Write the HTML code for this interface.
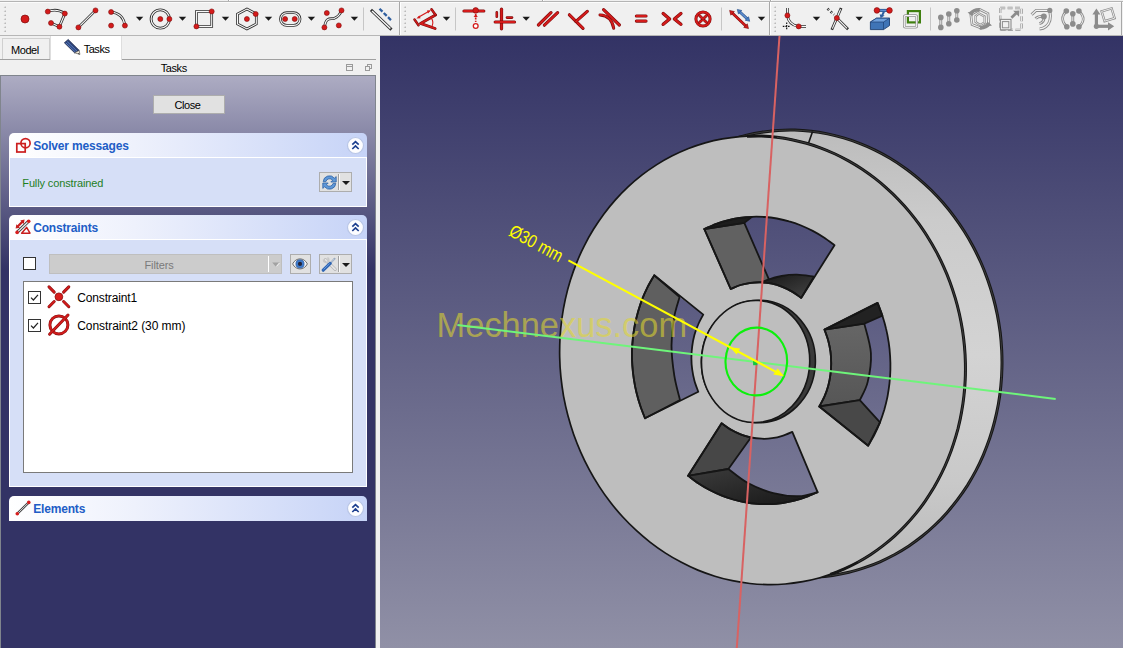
<!DOCTYPE html>
<html>
<head>
<meta charset="utf-8">
<title>FreeCAD Sketcher</title>
<style>
html,body{margin:0;padding:0;}
body{width:1123px;height:648px;overflow:hidden;background:#f0f0f0;position:relative;
  font-family:"Liberation Sans","DejaVu Sans",sans-serif;font-size:11px;color:#000;}
.abs{position:absolute;}
#topline{left:0;top:1px;width:1123px;height:1px;background:#b4b4b4;border-bottom:1px solid #fbfbfb;}
#tbline{left:0;top:35px;width:1123px;height:1px;background:#b6b6b6;}
.vsep{position:absolute;top:8px;width:1px;height:22px;background:#c4c4c4;}
.tbsep{position:absolute;top:2px;width:1px;height:33px;background:#a9a9a9;}
.tbsep2{position:absolute;top:2px;width:1px;height:33px;background:#fdfdfd;}
.ico{position:absolute;overflow:visible;}
.dd{position:absolute;top:16px;width:0;height:0;border-left:4px solid transparent;border-right:4px solid transparent;border-top:4px solid #1a1a1a;}
#view{left:380px;top:36px;width:743px;height:612px;background:linear-gradient(#333365 0,#9090a6 612px);overflow:hidden;}
#panel{left:0;top:75px;width:376px;height:573px;box-sizing:border-box;border-left:1px solid #80858d;border-top:1px solid #80858d;border-right:1px solid #80858d;
  background:linear-gradient(#adacc3 0,#333365 193px,#333365 100%);}
.txt{position:absolute;white-space:nowrap;line-height:14px;}
.hdr{position:absolute;left:9px;width:358px;height:25px;box-sizing:border-box;border-radius:5px 5px 0 0;
  background:linear-gradient(90deg,#ffffff 0,#eef1fc 35%,#c6d3f7 100%);border-bottom:1px solid #fff;}
.hdr .t{position:absolute;left:24.2px;top:6px;font-weight:bold;font-size:12px;color:#215dc6;white-space:nowrap;line-height:14px;letter-spacing:-0.17px;}
.bodyb{position:absolute;left:9px;width:358px;box-sizing:border-box;background:#d6dff7;border:1px solid #fff;border-top:none;}
</style>
</head>
<body>
<div id="topline" class="abs"></div>
<div id="tbline" class="abs"></div>
<svg class="abs" style="left:0;top:0;" width="1123" height="36" viewBox="0 0 1123 36">
<rect x="228" y="0" width="1" height="1" fill="#a8a8a8"/><rect x="229" y="0" width="1" height="1" fill="#ffffff"/>
<rect x="542" y="0" width="1" height="1" fill="#a8a8a8"/><rect x="543" y="0" width="1" height="1" fill="#ffffff"/>
<rect x="770" y="0" width="1" height="1" fill="#a8a8a8"/><rect x="771" y="0" width="1" height="1" fill="#ffffff"/>
<path d="M3.8000000000000003 8.1 L5.800000000000001 8.1 L5.800000000000001 6.1000000000000005 Z" fill="#adadad"/><path d="M3.8000000000000003 8.1 L3.8000000000000003 7.1000000000000005 L4.8 6.1000000000000005 L5.800000000000001 6.1000000000000005 Z" fill="#e2e2e2"/><path d="M3.8000000000000003 12.1 L5.800000000000001 12.1 L5.800000000000001 10.1 Z" fill="#adadad"/><path d="M3.8000000000000003 12.1 L3.8000000000000003 11.1 L4.8 10.1 L5.800000000000001 10.1 Z" fill="#e2e2e2"/><path d="M3.8000000000000003 16.099999999999998 L5.800000000000001 16.099999999999998 L5.800000000000001 14.1 Z" fill="#adadad"/><path d="M3.8000000000000003 16.099999999999998 L3.8000000000000003 15.1 L4.8 14.1 L5.800000000000001 14.1 Z" fill="#e2e2e2"/><path d="M3.8000000000000003 20.099999999999998 L5.800000000000001 20.099999999999998 L5.800000000000001 18.099999999999998 Z" fill="#adadad"/><path d="M3.8000000000000003 20.099999999999998 L3.8000000000000003 19.099999999999998 L4.8 18.099999999999998 L5.800000000000001 18.099999999999998 Z" fill="#e2e2e2"/><path d="M3.8000000000000003 24.099999999999998 L5.800000000000001 24.099999999999998 L5.800000000000001 22.099999999999998 Z" fill="#adadad"/><path d="M3.8000000000000003 24.099999999999998 L3.8000000000000003 23.099999999999998 L4.8 22.099999999999998 L5.800000000000001 22.099999999999998 Z" fill="#e2e2e2"/><path d="M3.8000000000000003 28.099999999999998 L5.800000000000001 28.099999999999998 L5.800000000000001 26.099999999999998 Z" fill="#adadad"/><path d="M3.8000000000000003 28.099999999999998 L3.8000000000000003 27.099999999999998 L4.8 26.099999999999998 L5.800000000000001 26.099999999999998 Z" fill="#e2e2e2"/><path d="M3.8000000000000003 32.1 L5.800000000000001 32.1 L5.800000000000001 30.099999999999998 Z" fill="#adadad"/><path d="M3.8000000000000003 32.1 L3.8000000000000003 31.099999999999998 L4.8 30.099999999999998 L5.800000000000001 30.099999999999998 Z" fill="#e2e2e2"/>
<circle cx="25" cy="19" r="4" fill="#d41b1b" stroke="#7d0c0c" stroke-width="0.7"/>
<path d="M47.8 11.6 Q57 8 64.8 13.6 L59.4 26.7 L51 23" fill="none" stroke="#2e2e2e" stroke-width="2.7" stroke-linecap="butt"/><path d="M47.8 11.6 Q57 8 64.8 13.6 L59.4 26.7 L51 23" fill="none" stroke="#fafafa" stroke-width="1.1"/>
<circle cx="47.8" cy="11.6" r="2.5" fill="#d41b1b" stroke="#7d0c0c" stroke-width="0.6"/><circle cx="64.8" cy="13.6" r="2.5" fill="#d41b1b" stroke="#7d0c0c" stroke-width="0.6"/><circle cx="59.4" cy="26.7" r="2.5" fill="#d41b1b" stroke="#7d0c0c" stroke-width="0.6"/><circle cx="51" cy="23" r="2.5" fill="#d41b1b" stroke="#7d0c0c" stroke-width="0.6"/>
<path d="M78.4 27.4 L95.5 10.4" fill="none" stroke="#2e2e2e" stroke-width="2.7" stroke-linecap="butt"/><path d="M78.4 27.4 L95.5 10.4" fill="none" stroke="#fafafa" stroke-width="1.1"/>
<circle cx="78.4" cy="27.4" r="2.5" fill="#d41b1b" stroke="#7d0c0c" stroke-width="0.6"/><circle cx="95.5" cy="10.4" r="2.5" fill="#d41b1b" stroke="#7d0c0c" stroke-width="0.6"/>
<path d="M111.1 12 Q123.5 13.5 124.9 25.6" fill="none" stroke="#2e2e2e" stroke-width="2.7" stroke-linecap="butt"/><path d="M111.1 12 Q123.5 13.5 124.9 25.6" fill="none" stroke="#fafafa" stroke-width="1.1"/>
<circle cx="111.1" cy="12" r="2.5" fill="#d41b1b" stroke="#7d0c0c" stroke-width="0.6"/><circle cx="124.9" cy="25.6" r="2.5" fill="#d41b1b" stroke="#7d0c0c" stroke-width="0.6"/><circle cx="111.1" cy="25.6" r="2.5" fill="#d41b1b" stroke="#7d0c0c" stroke-width="0.6"/>
<path d="M135.9 16.7 L143.29999999999998 16.7 L139.6 20.8 Z" fill="#1a1a1a"/>
<circle cx="160.3" cy="19" r="9.2" fill="none" stroke="#2e2e2e" stroke-width="2.8"/><circle cx="160.3" cy="19" r="9.2" fill="none" stroke="#fafafa" stroke-width="1.1"/>
<circle cx="160.3" cy="19" r="2.5" fill="#d41b1b" stroke="#7d0c0c" stroke-width="0.6"/><circle cx="169.4" cy="19" r="2.5" fill="#d41b1b" stroke="#7d0c0c" stroke-width="0.6"/>
<path d="M178.8 16.7 L186.2 16.7 L182.5 20.8 Z" fill="#1a1a1a"/>
<path d="M196.4 11.6 L211.7 11.6 L211.7 26.4 L196.4 26.4 Z" fill="none" stroke="#2e2e2e" stroke-width="2.7" stroke-linecap="butt"/><path d="M196.4 11.6 L211.7 11.6 L211.7 26.4 L196.4 26.4 Z" fill="none" stroke="#fafafa" stroke-width="1.1"/>
<circle cx="211.7" cy="11.4" r="2.5" fill="#d41b1b" stroke="#7d0c0c" stroke-width="0.6"/><circle cx="196.4" cy="26.4" r="2.5" fill="#d41b1b" stroke="#7d0c0c" stroke-width="0.6"/>
<path d="M221.8 16.7 L229.2 16.7 L225.5 20.8 Z" fill="#1a1a1a"/>
<path d="M246.9 9 L256.3 14 L256.3 24 L246.9 29 L237.5 24 L237.5 14 Z" fill="none" stroke="#2e2e2e" stroke-width="2.7" stroke-linecap="butt"/><path d="M246.9 9 L256.3 14 L256.3 24 L246.9 29 L237.5 24 L237.5 14 Z" fill="none" stroke="#fafafa" stroke-width="1.1"/>
<circle cx="246.9" cy="19" r="2.5" fill="#d41b1b" stroke="#7d0c0c" stroke-width="0.6"/><circle cx="255.7" cy="14" r="2.5" fill="#d41b1b" stroke="#7d0c0c" stroke-width="0.6"/>
<path d="M264.8 16.7 L272.2 16.7 L268.5 20.8 Z" fill="#1a1a1a"/>
<path d="M286.8 12.7 L293.7 12.7 A6.35 6.35 0 0 1 293.7 25.4 L286.8 25.4 A6.35 6.35 0 0 1 286.8 12.7 Z" fill="none" stroke="#2e2e2e" stroke-width="2.7" stroke-linecap="butt"/><path d="M286.8 12.7 L293.7 12.7 A6.35 6.35 0 0 1 293.7 25.4 L286.8 25.4 A6.35 6.35 0 0 1 286.8 12.7 Z" fill="none" stroke="#fafafa" stroke-width="1.1"/>
<circle cx="285.1" cy="19" r="2.5" fill="#d41b1b" stroke="#7d0c0c" stroke-width="0.6"/><circle cx="294.7" cy="19" r="2.5" fill="#d41b1b" stroke="#7d0c0c" stroke-width="0.6"/>
<path d="M307.7 16.7 L315.09999999999997 16.7 L311.4 20.8 Z" fill="#1a1a1a"/>
<path d="M324.4 27.4 C326 16 331 19.5 334 18.5 C338 17 340 15 341.5 10.4" fill="none" stroke="#2e2e2e" stroke-width="2.7" stroke-linecap="butt"/><path d="M324.4 27.4 C326 16 331 19.5 334 18.5 C338 17 340 15 341.5 10.4" fill="none" stroke="#fafafa" stroke-width="1.1"/>
<circle cx="326.8" cy="13" r="2.5" fill="#d41b1b" stroke="#7d0c0c" stroke-width="0.6"/><circle cx="341.5" cy="10.4" r="2.5" fill="#d41b1b" stroke="#7d0c0c" stroke-width="0.6"/><circle cx="324.4" cy="27.4" r="2.5" fill="#d41b1b" stroke="#7d0c0c" stroke-width="0.6"/><circle cx="338.8" cy="25.4" r="2.5" fill="#d41b1b" stroke="#7d0c0c" stroke-width="0.6"/>
<path d="M350.7 16.7 L358.09999999999997 16.7 L354.4 20.8 Z" fill="#1a1a1a"/>
<line x1="363.5" y1="7.5" x2="363.5" y2="30.5" stroke="#c6c6c6" stroke-width="1"/>
<path d="M372 10.9 L390.4 28.6" fill="none" stroke="#2e2e2e" stroke-width="3.0" stroke-linecap="square"/><path d="M372 10.9 L390.4 28.6" fill="none" stroke="#fafafa" stroke-width="1.4"/>
<path d="M379.5 8.7 L392.2 21.4" stroke="#2f5f9f" stroke-width="2.3" stroke-dasharray="4.2 1.8"/>
<line x1="399.5" y1="2" x2="399.5" y2="35" stroke="#a8a8a8" stroke-width="1"/><line x1="400.5" y1="2" x2="400.5" y2="35" stroke="#ffffff" stroke-width="1"/>
<path d="M403.8 8.1 L405.8 8.1 L405.8 6.1000000000000005 Z" fill="#adadad"/><path d="M403.8 8.1 L403.8 7.1000000000000005 L404.8 6.1000000000000005 L405.8 6.1000000000000005 Z" fill="#e2e2e2"/><path d="M403.8 12.1 L405.8 12.1 L405.8 10.1 Z" fill="#adadad"/><path d="M403.8 12.1 L403.8 11.1 L404.8 10.1 L405.8 10.1 Z" fill="#e2e2e2"/><path d="M403.8 16.099999999999998 L405.8 16.099999999999998 L405.8 14.1 Z" fill="#adadad"/><path d="M403.8 16.099999999999998 L403.8 15.1 L404.8 14.1 L405.8 14.1 Z" fill="#e2e2e2"/><path d="M403.8 20.099999999999998 L405.8 20.099999999999998 L405.8 18.099999999999998 Z" fill="#adadad"/><path d="M403.8 20.099999999999998 L403.8 19.099999999999998 L404.8 18.099999999999998 L405.8 18.099999999999998 Z" fill="#e2e2e2"/><path d="M403.8 24.099999999999998 L405.8 24.099999999999998 L405.8 22.099999999999998 Z" fill="#adadad"/><path d="M403.8 24.099999999999998 L403.8 23.099999999999998 L404.8 22.099999999999998 L405.8 22.099999999999998 Z" fill="#e2e2e2"/><path d="M403.8 28.099999999999998 L405.8 28.099999999999998 L405.8 26.099999999999998 Z" fill="#adadad"/><path d="M403.8 28.099999999999998 L403.8 27.099999999999998 L404.8 26.099999999999998 L405.8 26.099999999999998 Z" fill="#e2e2e2"/><path d="M403.8 32.1 L405.8 32.1 L405.8 30.099999999999998 Z" fill="#adadad"/><path d="M403.8 32.1 L403.8 31.099999999999998 L404.8 30.099999999999998 L405.8 30.099999999999998 Z" fill="#e2e2e2"/>
<path d="M435.5 14.9 L420.5 23.4 L435.1 28.5" fill="none" stroke="#7d0c0c" stroke-width="2.9000000000000004" stroke-linecap="round" stroke-linejoin="round"/><path d="M435.5 14.9 L420.5 23.4 L435.1 28.5" fill="none" stroke="#d41b1b" stroke-width="1.7000000000000002" stroke-linecap="round" stroke-linejoin="round"/>
<path d="M414.5 19.5 L418.5 25.2" fill="none" stroke="#7d0c0c" stroke-width="2.5" stroke-linecap="round" stroke-linejoin="round"/><path d="M414.5 19.5 L418.5 25.2" fill="none" stroke="#d41b1b" stroke-width="1.2999999999999998" stroke-linecap="round" stroke-linejoin="round"/><path d="M431.5 9.3 L435.4 14.7" fill="none" stroke="#7d0c0c" stroke-width="2.5" stroke-linecap="round" stroke-linejoin="round"/><path d="M431.5 9.3 L435.4 14.7" fill="none" stroke="#d41b1b" stroke-width="1.2999999999999998" stroke-linecap="round" stroke-linejoin="round"/>
<path d="M418 17.6 L429.4 11.1" fill="none" stroke="#d41b1b" stroke-width="1.2"/>
<path d="M416.4 18.6 L419.4 15.4 L420.6 18.2 Z M431 10.2 L428 13.4 L426.9 10.6 Z" fill="#d41b1b"/>
<path d="M431.6 18.6 Q433.8 22 432.1 26" fill="none" stroke="#d41b1b" stroke-width="1.1"/>
<path d="M442.8 16.7 L450.2 16.7 L446.5 20.8 Z" fill="#1a1a1a"/>
<line x1="455.5" y1="7.5" x2="455.5" y2="30.5" stroke="#c6c6c6" stroke-width="1"/>
<path d="M464 11 L483.8 11" fill="none" stroke="#7d0c0c" stroke-width="3.2" stroke-linecap="round" stroke-linejoin="round"/><path d="M464 11 L483.8 11" fill="none" stroke="#d41b1b" stroke-width="2.0" stroke-linecap="round" stroke-linejoin="round"/>
<circle cx="475.7" cy="10.4" r="2.8" fill="#d41b1b" stroke="#7d0c0c" stroke-width="0.6"/>
<path d="M475.7 14 L475.7 22" stroke="#d41b1b" stroke-width="1.6" stroke-dasharray="2 1.4"/><path d="M473.6 17 L475.7 14.2 L477.8 17 Z" fill="#d41b1b"/>
<circle cx="475.7" cy="26" r="2.4" fill="#fff" stroke="#d41b1b" stroke-width="1.3"/>
<path d="M501.5 9.2 L501.5 28.8" fill="none" stroke="#7d0c0c" stroke-width="3.2" stroke-linecap="round" stroke-linejoin="round"/><path d="M501.5 9.2 L501.5 28.8" fill="none" stroke="#d41b1b" stroke-width="2.0" stroke-linecap="round" stroke-linejoin="round"/><path d="M495.2 22 L514.5 22" fill="none" stroke="#7d0c0c" stroke-width="3.2" stroke-linecap="round" stroke-linejoin="round"/><path d="M495.2 22 L514.5 22" fill="none" stroke="#d41b1b" stroke-width="2.0" stroke-linecap="round" stroke-linejoin="round"/>
<path d="M496.8 12.4 L496.8 16.8" fill="none" stroke="#7d0c0c" stroke-width="2.6" stroke-linecap="round" stroke-linejoin="round"/><path d="M496.8 12.4 L496.8 16.8" fill="none" stroke="#d41b1b" stroke-width="1.4" stroke-linecap="round" stroke-linejoin="round"/><path d="M507 17.6 L512 17.6" fill="none" stroke="#7d0c0c" stroke-width="2.6" stroke-linecap="round" stroke-linejoin="round"/><path d="M507 17.6 L512 17.6" fill="none" stroke="#d41b1b" stroke-width="1.4" stroke-linecap="round" stroke-linejoin="round"/>
<path d="M522.5 16.7 L529.9000000000001 16.7 L526.2 20.8 Z" fill="#1a1a1a"/>
<path d="M538.4 25 L551 12.7" fill="none" stroke="#7d0c0c" stroke-width="3.2" stroke-linecap="round" stroke-linejoin="round"/><path d="M538.4 25 L551 12.7" fill="none" stroke="#d41b1b" stroke-width="2.0" stroke-linecap="round" stroke-linejoin="round"/><path d="M544.4 25.2 L557.6 12.7" fill="none" stroke="#7d0c0c" stroke-width="3.2" stroke-linecap="round" stroke-linejoin="round"/><path d="M544.4 25.2 L557.6 12.7" fill="none" stroke="#d41b1b" stroke-width="2.0" stroke-linecap="round" stroke-linejoin="round"/>
<path d="M569.4 14.8 L583 28.3" fill="none" stroke="#7d0c0c" stroke-width="3.2" stroke-linecap="round" stroke-linejoin="round"/><path d="M569.4 14.8 L583 28.3" fill="none" stroke="#d41b1b" stroke-width="2.0" stroke-linecap="round" stroke-linejoin="round"/><path d="M576 21.4 L587.3 11.4" fill="none" stroke="#7d0c0c" stroke-width="3.2" stroke-linecap="round" stroke-linejoin="round"/><path d="M576 21.4 L587.3 11.4" fill="none" stroke="#d41b1b" stroke-width="2.0" stroke-linecap="round" stroke-linejoin="round"/>
<path d="M600 14.9 Q611.5 15.5 613.7 28.2" fill="none" stroke="#7d0c0c" stroke-width="3.0" stroke-linecap="round" stroke-linejoin="round"/><path d="M600 14.9 Q611.5 15.5 613.7 28.2" fill="none" stroke="#d41b1b" stroke-width="1.8000000000000003" stroke-linecap="round" stroke-linejoin="round"/><path d="M603.6 9.7 L619.4 25" fill="none" stroke="#7d0c0c" stroke-width="3.2" stroke-linecap="round" stroke-linejoin="round"/><path d="M603.6 9.7 L619.4 25" fill="none" stroke="#d41b1b" stroke-width="2.0" stroke-linecap="round" stroke-linejoin="round"/>
<path d="M636.4 16 L646 16" fill="none" stroke="#7d0c0c" stroke-width="3.2" stroke-linecap="round" stroke-linejoin="round"/><path d="M636.4 16 L646 16" fill="none" stroke="#d41b1b" stroke-width="2.0" stroke-linecap="round" stroke-linejoin="round"/><path d="M636.4 21.1 L646 21.1" fill="none" stroke="#7d0c0c" stroke-width="3.2" stroke-linecap="round" stroke-linejoin="round"/><path d="M636.4 21.1 L646 21.1" fill="none" stroke="#d41b1b" stroke-width="2.0" stroke-linecap="round" stroke-linejoin="round"/>
<path d="M663.2 13.5 L669.6 19 L663.2 24.3" fill="none" stroke="#7d0c0c" stroke-width="3.4000000000000004" stroke-linecap="round" stroke-linejoin="round"/><path d="M663.2 13.5 L669.6 19 L663.2 24.3" fill="none" stroke="#d41b1b" stroke-width="2.2" stroke-linecap="round" stroke-linejoin="round"/><path d="M680.9 13.5 L674.4 19 L680.9 24.3" fill="none" stroke="#7d0c0c" stroke-width="3.4000000000000004" stroke-linecap="round" stroke-linejoin="round"/><path d="M680.9 13.5 L674.4 19 L680.9 24.3" fill="none" stroke="#d41b1b" stroke-width="2.2" stroke-linecap="round" stroke-linejoin="round"/>
<circle cx="703" cy="19" r="7.1" fill="none" stroke="#7d0c0c" stroke-width="3"/><circle cx="703" cy="19" r="7.1" fill="none" stroke="#d41b1b" stroke-width="2"/>
<path d="M699.4 15.4 L706.6 22.6 M706.6 15.4 L699.4 22.6" fill="none" stroke="#7d0c0c" stroke-width="2.8" stroke-linecap="round" stroke-linejoin="round"/><path d="M699.4 15.4 L706.6 22.6 M706.6 15.4 L699.4 22.6" fill="none" stroke="#d41b1b" stroke-width="1.6" stroke-linecap="round" stroke-linejoin="round"/>
<line x1="721.5" y1="7.5" x2="721.5" y2="30.5" stroke="#c6c6c6" stroke-width="1"/>
<path d="M731.5 12.3 L746.6 26.7" stroke="#7d0c0c" stroke-width="2.8"/><path d="M731.5 12.3 L746.6 26.7" stroke="#d41b1b" stroke-width="1.8"/>
<path d="M729.6 10.4 L734.4 11.6 L730.8 15.2 Z M748.5 28.6 L743.7 27.4 L747.3 23.8 Z" fill="#d41b1b" stroke="#7d0c0c" stroke-width="0.6"/>
<path d="M739.3 11.4 L747.7 19.3" stroke="#204a87" stroke-width="2.8"/><path d="M739.3 11.4 L747.7 19.3" stroke="#5f8fd0" stroke-width="1.6"/>
<path d="M737.3 9.4 L741.8 10.5 L738.4 13.9 Z M749.7 21.3 L745.2 20.2 L748.6 16.8 Z" fill="#4a7fc4" stroke="#204a87" stroke-width="0.6"/>
<path d="M757.8 16.7 L765.2 16.7 L761.5 20.8 Z" fill="#1a1a1a"/>
<line x1="769.5" y1="2" x2="769.5" y2="35" stroke="#a8a8a8" stroke-width="1"/><line x1="770.5" y1="2" x2="770.5" y2="35" stroke="#ffffff" stroke-width="1"/>
<path d="M773.8000000000001 8.1 L775.8000000000001 8.1 L775.8000000000001 6.1000000000000005 Z" fill="#adadad"/><path d="M773.8000000000001 8.1 L773.8000000000001 7.1000000000000005 L774.8000000000001 6.1000000000000005 L775.8000000000001 6.1000000000000005 Z" fill="#e2e2e2"/><path d="M773.8000000000001 12.1 L775.8000000000001 12.1 L775.8000000000001 10.1 Z" fill="#adadad"/><path d="M773.8000000000001 12.1 L773.8000000000001 11.1 L774.8000000000001 10.1 L775.8000000000001 10.1 Z" fill="#e2e2e2"/><path d="M773.8000000000001 16.099999999999998 L775.8000000000001 16.099999999999998 L775.8000000000001 14.1 Z" fill="#adadad"/><path d="M773.8000000000001 16.099999999999998 L773.8000000000001 15.1 L774.8000000000001 14.1 L775.8000000000001 14.1 Z" fill="#e2e2e2"/><path d="M773.8000000000001 20.099999999999998 L775.8000000000001 20.099999999999998 L775.8000000000001 18.099999999999998 Z" fill="#adadad"/><path d="M773.8000000000001 20.099999999999998 L773.8000000000001 19.099999999999998 L774.8000000000001 18.099999999999998 L775.8000000000001 18.099999999999998 Z" fill="#e2e2e2"/><path d="M773.8000000000001 24.099999999999998 L775.8000000000001 24.099999999999998 L775.8000000000001 22.099999999999998 Z" fill="#adadad"/><path d="M773.8000000000001 24.099999999999998 L773.8000000000001 23.099999999999998 L774.8000000000001 22.099999999999998 L775.8000000000001 22.099999999999998 Z" fill="#e2e2e2"/><path d="M773.8000000000001 28.099999999999998 L775.8000000000001 28.099999999999998 L775.8000000000001 26.099999999999998 Z" fill="#adadad"/><path d="M773.8000000000001 28.099999999999998 L773.8000000000001 27.099999999999998 L774.8000000000001 26.099999999999998 L775.8000000000001 26.099999999999998 Z" fill="#e2e2e2"/><path d="M773.8000000000001 32.1 L775.8000000000001 32.1 L775.8000000000001 30.099999999999998 Z" fill="#adadad"/><path d="M773.8000000000001 32.1 L773.8000000000001 31.099999999999998 L774.8000000000001 30.099999999999998 L775.8000000000001 30.099999999999998 Z" fill="#e2e2e2"/>
<path d="M787.4 8 L787.4 15.4 Q788.5 25 798.7 26.4 L806 26.4" fill="none" stroke="#2e2e2e" stroke-width="2.7" stroke-linecap="butt"/><path d="M787.4 8 L787.4 15.4 Q788.5 25 798.7 26.4 L806 26.4" fill="none" stroke="#fafafa" stroke-width="1.1"/>
<circle cx="787.4" cy="15.4" r="2.5" fill="#d41b1b" stroke="#7d0c0c" stroke-width="0.6"/><circle cx="798.7" cy="26.4" r="2.5" fill="#d41b1b" stroke="#7d0c0c" stroke-width="0.6"/>
<path d="M786.7 22.4 L786.7 30.2 M782.8 26.4 L790.6 26.4" stroke="#111" stroke-width="1.2" stroke-dasharray="1.6 1"/>
<path d="M812.8 16.7 L820.2 16.7 L816.5 20.8 Z" fill="#1a1a1a"/>
<path d="M840.6 9.2 L832.3 28.6" fill="none" stroke="#2e2e2e" stroke-width="2.7" stroke-linecap="square"/><path d="M840.6 9.2 L832.3 28.6" fill="none" stroke="#fafafa" stroke-width="1.1"/>
<path d="M836.8 18 L847.1 28.3" fill="none" stroke="#2e2e2e" stroke-width="2.7" stroke-linecap="square"/><path d="M836.8 18 L847.1 28.3" fill="none" stroke="#fafafa" stroke-width="1.1"/>
<path d="M827.4 8.7 L834.1 14.7" stroke="#2e2e2e" stroke-width="2.4" stroke-dasharray="2.2 2"/><path d="M827.4 8.7 L834.1 14.7" stroke="#fafafa" stroke-width="0.8" stroke-dasharray="2.2 2"/>
<circle cx="836.8" cy="18" r="2.5" fill="#d41b1b" stroke="#7d0c0c" stroke-width="0.6"/>
<path d="M855.5 16.7 L862.9000000000001 16.7 L859.2 20.8 Z" fill="#1a1a1a"/>
<path d="M870.4 22 L876.5 18.2 L889.5 18.2 L889.5 25.6 L883.5 29.6 L870.4 29.6 Z" fill="#3f74b6" stroke="#1d3f72" stroke-width="0.9" stroke-linejoin="round"/>
<path d="M870.4 22 L876.5 18.2 L889.5 18.2 L883.5 22 Z" fill="#6fa0dc" stroke="#1d3f72" stroke-width="0.7" stroke-linejoin="round"/>
<path d="M883.5 22 L883.5 29.6" stroke="#1d3f72" stroke-width="0.7"/>
<path d="M876.9 10.4 L889.5 10.4" stroke="#204a87" stroke-width="3"/><path d="M876.9 10.4 L889.5 10.4" stroke="#5f8fd0" stroke-width="1.6"/>
<path d="M884 11.5 L882.2 15.2" stroke="#2f5f9f" stroke-width="2"/><path d="M879.6 14.2 L884.6 15.6 L880.6 18.2 Z" fill="#2f5f9f"/>
<circle cx="876.9" cy="10.4" r="2.8" fill="#d41b1b" stroke="#7d0c0c" stroke-width="0.6"/><circle cx="889.5" cy="10.4" r="2.8" fill="#d41b1b" stroke="#7d0c0c" stroke-width="0.6"/>
<rect x="907.9" y="11.1" width="12" height="11.3" fill="none" stroke="#3f7f0f" stroke-width="2.2"/>
<rect x="904.3" y="15.6" width="12.4" height="11.7" rx="1.2" fill="none" stroke="#8f8f8f" stroke-width="2.6"/><rect x="904.3" y="15.6" width="12.4" height="11.7" rx="1.2" fill="none" stroke="#fafafa" stroke-width="1.1"/>
<line x1="930.5" y1="7.5" x2="930.5" y2="30.5" stroke="#c6c6c6" stroke-width="1"/>
<path d="M940.8 17.4 L940.8 27.4" fill="none" stroke="#8c8c8c" stroke-width="2.8"/><path d="M940.8 17.4 L940.8 27.4" fill="none" stroke="#f4f4f4" stroke-width="1.0"/><circle cx="940.8" cy="17.4" r="2.8" fill="#8c8c8c"/><circle cx="940.8" cy="27.4" r="2.8" fill="#8c8c8c"/>
<path d="M948.8 14 L948.8 23.8" fill="none" stroke="#8c8c8c" stroke-width="2.8"/><path d="M948.8 14 L948.8 23.8" fill="none" stroke="#f4f4f4" stroke-width="1.0"/><circle cx="948.8" cy="14" r="2.8" fill="#8c8c8c"/><circle cx="948.8" cy="23.8" r="2.8" fill="#8c8c8c"/>
<path d="M956.8 10.7 L956.8 20" fill="none" stroke="#8c8c8c" stroke-width="2.8"/><path d="M956.8 10.7 L956.8 20" fill="none" stroke="#f4f4f4" stroke-width="1.0"/><circle cx="956.8" cy="10.7" r="2.8" fill="#8c8c8c"/><circle cx="956.8" cy="20" r="2.8" fill="#8c8c8c"/>
<path d="M979.8 9.5 L988 13.5 L988.6 23 L981 28 L972 24.5 L970.8 14.5 Z" fill="none" stroke="#8c8c8c" stroke-width="2.6"/><path d="M979.8 9.5 L988 13.5 L988.6 23 L981 28 L972 24.5 L970.8 14.5 Z" fill="none" stroke="#f4f4f4" stroke-width="1.0"/>
<path d="M979 13.5 L984.6 16.5 L984.6 22.5 L980 25 L975.5 22 L975.5 16 Z" fill="none" stroke="#8c8c8c" stroke-width="2.2"/><path d="M979 13.5 L984.6 16.5 L984.6 22.5 L980 25 L975.5 22 L975.5 16 Z" fill="none" stroke="#f4f4f4" stroke-width="0.8"/>
<path d="M969 13 Q973 7.5 980 8 L979.4 11.6 Q974 11.5 971.8 15 Z M990.6 24.5 Q987 30 979.6 29.6 L980.2 26 Q985.5 26 987.8 22.6 Z" fill="#8c8c8c"/>
<path d="M967.6 12.4 L972.6 16.4 L972.8 10.8 Z M992 25.4 L987 21.2 L986.8 26.8 Z" fill="#8c8c8c"/>
<rect x="1000.2" y="8" width="21.4" height="21.8" fill="none" stroke="#8c8c8c" stroke-width="2.3" stroke-dasharray="5 2.4"/><rect x="1000.2" y="8" width="21.4" height="21.8" fill="none" stroke="#f4f4f4" stroke-width="1.0" stroke-dasharray="5 2.4"/>
<rect x="1000.4" y="19.4" width="10.6" height="10.4" fill="#f0f0f0" stroke="#8c8c8c" stroke-width="1.1"/><rect x="1002.4" y="21.6" width="6.4" height="6.2" fill="none" stroke="#8c8c8c" stroke-width="1"/>
<path d="M1011.4 17.8 L1016.8 12.6" stroke="#8c8c8c" stroke-width="2.8"/><path d="M1013.2 10.8 L1019.4 10.6 L1019 16.8 Z" fill="#8c8c8c"/>
<path d="M1031.6 14.6 L1036.1 10.4 L1049.8 10.4 Q1052 22 1046 26.5 Q1043.5 28.6 1039.6 28.9" fill="none" stroke="#8c8c8c" stroke-width="3.0"/><path d="M1031.6 14.6 L1036.1 10.4 L1049.8 10.4 Q1052 22 1046 26.5 Q1043.5 28.6 1039.6 28.9" fill="none" stroke="#f4f4f4" stroke-width="1.2"/>
<path d="M1035.6 18.6 Q1038 15.8 1043.8 16.4 Q1044.6 22.4 1039.4 23.6" fill="none" stroke="#8c8c8c" stroke-width="2.8"/><path d="M1035.6 18.6 Q1038 15.8 1043.8 16.4 Q1044.6 22.4 1039.4 23.6" fill="none" stroke="#f4f4f4" stroke-width="1.0"/>
<circle cx="1049.8" cy="10.4" r="2.6" fill="#8c8c8c"/><circle cx="1043.8" cy="16.4" r="3.0" fill="#8c8c8c"/>
<path d="M1066.3 11 Q1058.6 19 1066.8 26.8" fill="none" stroke="#8c8c8c" stroke-width="2.6"/><path d="M1066.3 11 Q1058.6 19 1066.8 26.8" fill="none" stroke="#f4f4f4" stroke-width="0.9"/><path d="M1078.9 11 Q1087.6 19 1078.9 26.8" fill="none" stroke="#8c8c8c" stroke-width="2.6"/><path d="M1078.9 11 Q1087.6 19 1078.9 26.8" fill="none" stroke="#f4f4f4" stroke-width="0.9"/><path d="M1072.8 13.7 L1072.8 23.9" fill="none" stroke="#8c8c8c" stroke-width="2.8"/><path d="M1072.8 13.7 L1072.8 23.9" fill="none" stroke="#f4f4f4" stroke-width="0.9"/>
<circle cx="1066.3" cy="11" r="2.8" fill="#8c8c8c"/><circle cx="1066.8" cy="26.8" r="2.8" fill="#8c8c8c"/><circle cx="1078.9" cy="11" r="2.8" fill="#8c8c8c"/><circle cx="1078.9" cy="26.8" r="2.8" fill="#8c8c8c"/><circle cx="1072.8" cy="13.7" r="2.8" fill="#8c8c8c"/><circle cx="1072.8" cy="23.9" r="2.8" fill="#8c8c8c"/>
<path d="M1096.4 26.3 L1096.4 13" stroke="#8c8c8c" stroke-width="3.2"/><path d="M1096.4 26.3 L1109 26.3" stroke="#8c8c8c" stroke-width="3.2"/>
<path d="M1092.4 14.4 L1096.4 8.6 L1100.4 14.4 Z M1108 22.2 L1114.2 26.3 L1108 30.4 Z" fill="#8c8c8c"/>
<circle cx="1096.4" cy="26.3" r="2.6" fill="#8c8c8c"/>
<path d="M1101.6 11.4 L1111.6 8.4 L1114.6 18.2 L1104.6 21.2 Z" fill="none" stroke="#8c8c8c" stroke-width="2.4"/><path d="M1101.6 11.4 L1111.6 8.4 L1114.6 18.2 L1104.6 21.2 Z" fill="none" stroke="#f4f4f4" stroke-width="0.9"/>
<line x1="1121.5" y1="2" x2="1121.5" y2="35" stroke="#a8a8a8" stroke-width="1"/>
</svg>
<!-- LEFT DOCK: tabs + title -->
<div class="abs" style="left:0;top:59px;width:376px;height:1px;background:#a0a0a0;"></div>
<div class="abs" style="left:2px;top:38px;width:48px;height:21px;box-sizing:border-box;border:1px solid #d0d0d0;border-bottom:none;background:#f0f0f0;"></div>
<div class="abs" style="left:50px;top:36px;width:72px;height:24px;box-sizing:border-box;background:#ffffff;border-left:1px solid #dedede;border-right:1px solid #dedede;"></div>
<span id="t_model" class="txt" style="left:11px;top:43px;letter-spacing:-0.43px;">Model</span>
<svg class="ico" style="left:63px;top:39px;" width="18" height="16" viewBox="0 0 18 16">
  <path d="M1.4 3.8 L5.2 0.5 L16.2 11.4 L11.6 13.8 Z" fill="#2b4177" stroke="#1b274d" stroke-width="0.8" stroke-linejoin="round"/>
  <path d="M4.2 2.6 L14.6 12.8 M2.8 3.8 L13 13.6" stroke="#5f86cc" stroke-width="0.9"/>
  <path d="M11.6 13.8 L16.2 11.4 L16.9 15.4 Z" fill="#f2ead8" stroke="#3a3a3a" stroke-width="0.6" stroke-linejoin="round"/>
  <path d="M15.4 14 L16.9 15.4 L15 15 Z" fill="#222"/>
</svg>
<span id="t_tasks" class="txt" style="left:83.7px;top:42px;letter-spacing:-0.47px;">Tasks</span>
<span id="t_title" class="txt" style="left:160.7px;top:61px;letter-spacing:-0.4px;">Tasks</span>
<svg class="ico" style="left:345px;top:63px;" width="9" height="9" viewBox="0 0 9 9"><rect x="1.5" y="1.5" width="6" height="6" fill="none" stroke="#9a9a9a" stroke-width="1"/><line x1="1.5" y1="3.5" x2="7.5" y2="3.5" stroke="#9a9a9a" stroke-width="1"/></svg>
<svg class="ico" style="left:364px;top:63px;" width="9" height="9" viewBox="0 0 9 9"><rect x="3.5" y="1.5" width="4" height="4" fill="none" stroke="#9a9a9a" stroke-width="1"/><rect x="1.5" y="3.5" width="4" height="4" fill="#f0f0f0" stroke="#9a9a9a" stroke-width="1"/></svg>

<!-- TASK PANEL -->
<div id="panel" class="abs"></div>
<div class="abs" style="left:153px;top:95px;width:71.5px;height:19.3px;box-sizing:border-box;background:#e1e1e1;border:1px solid #adadad;"></div>
<span id="t_close" class="txt" style="left:174.6px;top:98px;letter-spacing:-0.48px;">Close</span>

<!-- Solver messages -->
<div class="hdr" style="top:133px;">
  <svg class="ico" style="left:6px;top:4px;" width="17" height="17" viewBox="0 0 17 17">
    <circle cx="10.5" cy="6.2" r="4.6" fill="none" stroke="#cc1f1f" stroke-width="1.7"/>
    <rect x="1.8" y="6.6" width="8.4" height="8.4" fill="none" stroke="#cc1f1f" stroke-width="1.7"/>
  </svg>
  <span id="t_solver" class="t">Solver messages</span>
  <svg class="ico" style="left:337px;top:3px;" width="19" height="19" viewBox="0 0 19 19"><circle cx="9.5" cy="9.5" r="8" fill="#fdfdff" stroke="#b9c6e6" stroke-width="1.2"/><path d="M6.3 8.6 L9.5 5.6 L12.7 8.6 M6.3 13 L9.5 10 L12.7 13" fill="none" stroke="#1d3f8f" stroke-width="1.7"/></svg>
</div>
<div class="bodyb" style="top:158px;height:49px;"></div>
<span id="t_fully" class="txt" style="left:22.3px;top:176px;color:#1e7e1e;letter-spacing:-0.13px;">Fully constrained</span>
<div class="abs" style="left:319px;top:172px;width:33px;height:20px;box-sizing:border-box;background:#e1e1e1;border:1px solid #adadad;"></div>
<div class="abs" style="left:338px;top:174px;width:1px;height:16px;background:#a0a0a0;"></div><div class="abs" style="left:339px;top:174px;width:1px;height:16px;background:#fbfbfb;"></div>
<div class="dd" style="left:342px;top:181px;"></div>
<svg class="ico" style="left:320.5px;top:174px;" width="17" height="17" viewBox="0 0 17 17">
  <path d="M2.2 7.6 A6.3 6.3 0 0 1 13.4 4.2 L15.2 2.6 L15.2 8 L9.8 8 L11.6 6.2 A3.8 3.8 0 0 0 4.9 7.6 Z" fill="#5f98d8" stroke="#2f62a4" stroke-width="0.8" stroke-linejoin="round"/>
  <path d="M14.8 9.4 A6.3 6.3 0 0 1 3.6 12.8 L1.8 14.4 L1.8 9 L7.2 9 L5.4 10.8 A3.8 3.8 0 0 0 12.1 9.4 Z" fill="#5f98d8" stroke="#2f62a4" stroke-width="0.8" stroke-linejoin="round"/>
</svg>

<!-- Constraints -->
<div class="hdr" style="top:215px;">
  <svg class="ico" style="left:6px;top:4px;" width="17" height="17" viewBox="0 0 17 17">
    <path d="M6.6 14.2 L11.6 8.4 L15 14.2 Z" fill="none" stroke="#c81e1e" stroke-width="1.5" stroke-linejoin="round"/>
    <path d="M2.1 13.4 L13.7 2.2" stroke="#3a3a3a" stroke-width="3"/><path d="M2.1 13.4 L13.7 2.2" stroke="#f2f2f2" stroke-width="1.3"/>
    <path d="M2.4 7.8 L7.8 2.4" stroke="#c81e1e" stroke-width="2.2"/>
    <path d="M0.6 9.6 L1.4 5.2 L5 8.8 Z M9.6 0.6 L8.8 5 L5.2 1.4 Z" fill="#c81e1e"/>
    <circle cx="2.1" cy="13.4" r="1.8" fill="#d81e1e"/><circle cx="13.7" cy="2.2" r="1.8" fill="#d81e1e"/>
  </svg>
  <span id="t_constraints" class="t">Constraints</span>
  <svg class="ico" style="left:337px;top:3px;" width="19" height="19" viewBox="0 0 19 19"><circle cx="9.5" cy="9.5" r="8" fill="#fdfdff" stroke="#b9c6e6" stroke-width="1.2"/><path d="M6.3 8.6 L9.5 5.6 L12.7 8.6 M6.3 13 L9.5 10 L12.7 13" fill="none" stroke="#1d3f8f" stroke-width="1.7"/></svg>
</div>
<div class="bodyb" style="top:240px;height:247px;"></div>
<div class="abs" style="left:23px;top:257px;width:13px;height:13px;box-sizing:border-box;background:#fff;border:1px solid #333;"></div>
<div class="abs" style="left:49px;top:254px;width:233px;height:20px;box-sizing:border-box;background:#cccccc;border:1px solid #bfbfbf;"></div>
<div class="abs" style="left:267.8px;top:256px;width:1.4px;height:16px;background:#ffffff;"></div>
<svg class="ico" style="left:271px;top:261px;" width="10" height="8" viewBox="0 0 10 8"><path d="M1.2 1.6 L8.6 1.6 L4.9 5.8 Z" fill="#a2a2a2"/><path d="M5.4 5.4 L8.4 2" stroke="#fff" stroke-width="0.9"/></svg>
<span id="t_filters" class="txt" style="left:144.5px;top:258px;color:#7a7a7a;font-size:11px;letter-spacing:-0.1px;">Filters</span>
<div class="abs" style="left:290px;top:254px;width:21px;height:20px;box-sizing:border-box;background:#e1e1e1;border:1px solid #adadad;"></div>
<svg class="ico" style="left:291.2px;top:256px;" width="18" height="16" viewBox="0 0 18 16">
  <path d="M1.6 7.9 C5 1.2 13 1.2 16.4 7.9 C13 14.6 5 14.6 1.6 7.9 Z" fill="#f6f6f6" stroke="#6c6c6c" stroke-width="1"/>
  <circle cx="9" cy="7.9" r="4.1" fill="#3f7ccc" stroke="#2a5aa0" stroke-width="0.7"/><circle cx="9" cy="7.9" r="2.1" fill="#25253a"/>
</svg>
<div class="abs" style="left:319px;top:254px;width:33px;height:20px;box-sizing:border-box;background:#e1e1e1;border:1px solid #adadad;"></div>
<div class="abs" style="left:338px;top:256px;width:1px;height:16px;background:#a0a0a0;"></div><div class="abs" style="left:339px;top:256px;width:1px;height:16px;background:#fbfbfb;"></div>
<div class="dd" style="left:342px;top:263px;"></div>
<svg class="ico" style="left:321px;top:256px;" width="17" height="17" viewBox="0 0 17 17">
  <path d="M4.4 3.6 L14.2 13.4" stroke="#b4b4b4" stroke-width="3" stroke-linecap="round"/><path d="M4.4 3.6 L14.2 13.4" stroke="#e6e6e6" stroke-width="1.6" stroke-linecap="round"/>
  <path d="M2.6 3.4 A2.6 2.6 0 1 0 6.4 1.6" fill="none" stroke="#c8c8c8" stroke-width="1.5"/>
  <path d="M9.6 7 L13.6 2.6" stroke="#8ea0b8" stroke-width="1.8" stroke-linecap="round"/><path d="M9.8 6.8 L13.4 2.8" stroke="#dfe6f0" stroke-width="0.7"/>
  <path d="M2.2 14.2 L9.2 7.4" stroke="#2f66b4" stroke-width="3.2" stroke-linecap="round"/><path d="M2.6 13.4 L8.6 7.6" stroke="#6f9fe0" stroke-width="0.9"/>
</svg>
<div class="abs" style="left:23px;top:281px;width:330px;height:192px;box-sizing:border-box;background:#fff;border:1px solid #7a7a7a;"></div>
<!-- row 1 -->
<div class="abs" style="left:28px;top:291px;width:13px;height:13px;box-sizing:border-box;background:#fff;border:1px solid #333;"></div>
<svg class="ico" style="left:28px;top:291px;" width="13" height="13" viewBox="0 0 13 13"><path d="M3 6.6 L5.4 9 L10 3.8" fill="none" stroke="#222" stroke-width="1.2"/></svg>
<svg class="ico" style="left:47px;top:285px;" width="24" height="24" viewBox="0 0 24 24">
  <path d="M2 1.9 L7.2 7.1 M21.8 1.9 L16.6 7.1 M2 21.7 L7.2 16.5 M21.8 21.7 L16.6 16.5" stroke="#8a1010" stroke-width="3" stroke-linecap="round"/>
  <path d="M2 1.9 L7.2 7.1 M21.8 1.9 L16.6 7.1 M2 21.7 L7.2 16.5 M21.8 21.7 L16.6 16.5" stroke="#d01c1c" stroke-width="1.9" stroke-linecap="round"/>
  <circle cx="11.9" cy="11.8" r="3.9" fill="#d81e1e" stroke="#8a0f0f" stroke-width="0.8"/>
</svg>
<span id="t_c1" class="txt" style="left:77.2px;top:291px;font-size:12px;letter-spacing:-0.14px;">Constraint1</span>
<!-- row 2 -->
<div class="abs" style="left:28px;top:319px;width:13px;height:13px;box-sizing:border-box;background:#fff;border:1px solid #333;"></div>
<svg class="ico" style="left:28px;top:319px;" width="13" height="13" viewBox="0 0 13 13"><path d="M3 6.6 L5.4 9 L10 3.8" fill="none" stroke="#222" stroke-width="1.2"/></svg>
<svg class="ico" style="left:47px;top:313px;" width="24" height="24" viewBox="0 0 24 24">
  <circle cx="11.9" cy="11.9" r="9" fill="none" stroke="#8a1010" stroke-width="3"/><circle cx="11.9" cy="11.9" r="9" fill="none" stroke="#d01c1c" stroke-width="1.9"/>
  <path d="M2.6 21.2 L21 2" stroke="#8a1010" stroke-width="3" stroke-linecap="round"/><path d="M2.6 21.2 L21 2" stroke="#d01c1c" stroke-width="1.9" stroke-linecap="round"/>
</svg>
<span id="t_c2" class="txt" style="left:77.2px;top:319px;font-size:12px;letter-spacing:-0.06px;">Constraint2 (30 mm)</span>

<!-- Elements -->
<div class="hdr" style="top:496px;border-bottom:none;">
  <svg class="ico" style="left:6px;top:4px;" width="17" height="17" viewBox="0 0 17 17">
    <path d="M2.3 13.7 L13.8 2.4" stroke="#444" stroke-width="2.4"/><path d="M2.3 13.7 L13.8 2.4" stroke="#e4e4e4" stroke-width="0.9"/>
    <circle cx="2.3" cy="13.7" r="1.8" fill="#d81e1e"/><circle cx="13.8" cy="2.4" r="1.8" fill="#d81e1e"/>
  </svg>
  <span id="t_elements" class="t">Elements</span>
  <svg class="ico" style="left:337px;top:3px;" width="19" height="19" viewBox="0 0 19 19"><circle cx="9.5" cy="9.5" r="8" fill="#fdfdff" stroke="#b9c6e6" stroke-width="1.2"/><path d="M6.3 8.6 L9.5 5.6 L12.7 8.6 M6.3 13 L9.5 10 L12.7 13" fill="none" stroke="#1d3f8f" stroke-width="1.7"/></svg>
</div>

<!-- 3D VIEW -->
<div id="view" class="abs">
<svg id="scene" width="743" height="612" viewBox="380 36 743 612" style="position:absolute;left:0;top:0;">
<defs>
<linearGradient id="bg" gradientUnits="userSpaceOnUse" x1="0" y1="36" x2="0" y2="648"><stop offset="0" stop-color="#333365"/><stop offset="1" stop-color="#9090a6"/></linearGradient>
<linearGradient id="rimg" gradientUnits="userSpaceOnUse" x1="0" y1="130" x2="0" y2="580"><stop offset="0" stop-color="#bcbcbc"/><stop offset="0.2" stop-color="#cbcbcb"/><stop offset="0.5" stop-color="#d3d3d3"/><stop offset="0.78" stop-color="#c9c9c9"/><stop offset="1" stop-color="#b9b9b9"/></linearGradient>
<linearGradient id="dk1" x1="0" y1="0" x2="1" y2="1"><stop offset="0" stop-color="#161616"/><stop offset="1" stop-color="#454545"/></linearGradient>
<linearGradient id="dk2" x1="0" y1="0" x2="1" y2="1"><stop offset="0" stop-color="#3c3c3c"/><stop offset="1" stop-color="#161616"/></linearGradient>
<linearGradient id="wl" x1="0" y1="0" x2="0" y2="1"><stop offset="0" stop-color="#666666"/><stop offset="1" stop-color="#565656"/></linearGradient>
</defs>
<path d="M730.0 140.0 C732.6 139.2 740.4 136.7 745.7 135.4 C751.1 134.1 756.4 133.0 761.8 132.2 C767.2 131.4 772.7 130.8 778.2 130.4 C783.6 130.1 789.1 130.0 794.6 130.1 C800.1 130.3 805.6 130.7 811.1 131.3 C816.6 131.9 822.0 132.8 827.5 133.9 C832.9 135.0 838.3 136.4 843.6 137.9 C849.0 139.5 854.3 141.3 859.5 143.4 C864.8 145.4 869.9 147.7 875.0 150.2 C880.1 152.7 885.1 155.4 890.0 158.3 C894.9 161.2 899.7 164.4 904.4 167.7 C909.1 171.0 913.6 174.6 918.1 178.3 C922.5 182.0 926.8 185.9 931.0 190.0 C935.1 194.1 939.2 198.4 943.0 202.8 C946.9 207.3 950.6 211.9 954.1 216.6 C957.7 221.4 961.0 226.3 964.2 231.3 C967.4 236.3 970.4 241.5 973.2 246.8 C976.0 252.1 978.6 257.5 981.1 263.0 C983.5 268.4 985.7 274.1 987.7 279.7 C989.7 285.4 991.5 291.2 993.1 297.0 C994.7 302.8 996.1 308.7 997.3 314.6 C998.5 320.5 999.4 326.5 1000.2 332.4 C1000.9 338.4 1001.4 344.4 1001.7 350.4 C1002.0 356.4 1002.1 362.5 1001.9 368.5 C1001.8 374.5 1001.4 380.5 1000.8 386.4 C1000.2 392.3 999.4 398.3 998.4 404.1 C997.3 410.0 996.1 415.8 994.6 421.5 C993.2 427.2 991.5 432.9 989.6 438.5 C987.7 444.0 985.6 449.5 983.4 454.8 C981.1 460.2 978.6 465.5 975.9 470.6 C973.2 475.7 970.3 480.7 967.3 485.6 C964.2 490.4 960.9 495.1 957.5 499.7 C954.1 504.2 950.5 508.6 946.7 512.9 C943.0 517.1 939.1 521.1 935.0 525.0 C930.9 528.9 926.7 532.6 922.4 536.0 C918.0 539.5 913.5 542.8 908.9 545.9 C904.3 548.9 899.6 551.8 894.8 554.5 C889.9 557.1 885.0 559.6 880.0 561.8 C874.9 564.0 869.8 565.9 864.6 567.7 C859.4 569.4 854.2 571.0 848.9 572.2 C843.5 573.5 838.2 574.6 832.8 575.4 C827.3 576.2 821.9 576.7 816.4 577.0 C811.0 577.4 802.7 577.2 800.0 577.3 L800.0 560.0 C793.3 526.7 776.7 428.3 760.0 360.0 C743.3 291.7 710.0 185.0 700.0 150.0 Z" fill="url(#rimg)" stroke="none"/>
<path d="M730.0 140.0 C732.6 139.2 740.4 136.7 745.7 135.4 C751.1 134.1 756.4 133.0 761.8 132.2 C767.2 131.4 772.7 130.8 778.2 130.4 C783.6 130.1 789.1 130.0 794.6 130.1 C800.1 130.3 805.6 130.7 811.1 131.3 C816.6 131.9 822.0 132.8 827.5 133.9 C832.9 135.0 838.3 136.4 843.6 137.9 C849.0 139.5 854.3 141.3 859.5 143.4 C864.8 145.4 869.9 147.7 875.0 150.2 C880.1 152.7 885.1 155.4 890.0 158.3 C894.9 161.2 899.7 164.4 904.4 167.7 C909.1 171.0 913.6 174.6 918.1 178.3 C922.5 182.0 926.8 185.9 931.0 190.0 C935.1 194.1 939.2 198.4 943.0 202.8 C946.9 207.3 950.6 211.9 954.1 216.6 C957.7 221.4 961.0 226.3 964.2 231.3 C967.4 236.3 970.4 241.5 973.2 246.8 C976.0 252.1 978.6 257.5 981.1 263.0 C983.5 268.4 985.7 274.1 987.7 279.7 C989.7 285.4 991.5 291.2 993.1 297.0 C994.7 302.8 996.1 308.7 997.3 314.6 C998.5 320.5 999.4 326.5 1000.2 332.4 C1000.9 338.4 1001.4 344.4 1001.7 350.4 C1002.0 356.4 1002.1 362.5 1001.9 368.5 C1001.8 374.5 1001.4 380.5 1000.8 386.4 C1000.2 392.3 999.4 398.3 998.4 404.1 C997.3 410.0 996.1 415.8 994.6 421.5 C993.2 427.2 991.5 432.9 989.6 438.5 C987.7 444.0 985.6 449.5 983.4 454.8 C981.1 460.2 978.6 465.5 975.9 470.6 C973.2 475.7 970.3 480.7 967.3 485.6 C964.2 490.4 960.9 495.1 957.5 499.7 C954.1 504.2 950.5 508.6 946.7 512.9 C943.0 517.1 939.1 521.1 935.0 525.0 C930.9 528.9 926.7 532.6 922.4 536.0 C918.0 539.5 913.5 542.8 908.9 545.9 C904.3 548.9 899.6 551.8 894.8 554.5 C889.9 557.1 885.0 559.6 880.0 561.8 C874.9 564.0 869.8 565.9 864.6 567.7 C859.4 569.4 854.2 571.0 848.9 572.2 C843.5 573.5 838.2 574.6 832.8 575.4 C827.3 576.2 821.9 576.7 816.4 577.0 C811.0 577.4 802.7 577.2 800.0 577.3 " fill="none" stroke="#161616" stroke-width="3.0" stroke-linejoin="round"/>
<path d="M730.0 140.0 C732.6 139.2 740.4 136.7 745.7 135.4 C751.1 134.1 756.4 133.0 761.8 132.2 C767.2 131.4 772.7 130.8 778.2 130.4 C783.6 130.1 789.1 130.0 794.6 130.1 C800.1 130.3 805.6 130.7 811.1 131.3 C816.6 131.9 822.0 132.8 827.5 133.9 C832.9 135.0 838.3 136.4 843.6 137.9 C849.0 139.5 854.3 141.3 859.5 143.4 C864.8 145.4 869.9 147.7 875.0 150.2 C880.1 152.7 885.1 155.4 890.0 158.3 C894.9 161.2 899.7 164.4 904.4 167.7 C909.1 171.0 913.6 174.6 918.1 178.3 C922.5 182.0 926.8 185.9 931.0 190.0 C935.1 194.1 939.2 198.4 943.0 202.8 C946.9 207.3 950.6 211.9 954.1 216.6 C957.7 221.4 961.0 226.3 964.2 231.3 C967.4 236.3 970.4 241.5 973.2 246.8 C976.0 252.1 978.6 257.5 981.1 263.0 C983.5 268.4 985.7 274.1 987.7 279.7 C989.7 285.4 991.5 291.2 993.1 297.0 C994.7 302.8 996.1 308.7 997.3 314.6 C998.5 320.5 999.4 326.5 1000.2 332.4 C1000.9 338.4 1001.4 344.4 1001.7 350.4 C1002.0 356.4 1002.1 362.5 1001.9 368.5 C1001.8 374.5 1001.4 380.5 1000.8 386.4 C1000.2 392.3 999.4 398.3 998.4 404.1 C997.3 410.0 996.1 415.8 994.6 421.5 C993.2 427.2 991.5 432.9 989.6 438.5 C987.7 444.0 985.6 449.5 983.4 454.8 C981.1 460.2 978.6 465.5 975.9 470.6 C973.2 475.7 970.3 480.7 967.3 485.6 C964.2 490.4 960.9 495.1 957.5 499.7 C954.1 504.2 950.5 508.6 946.7 512.9 C943.0 517.1 939.1 521.1 935.0 525.0 C930.9 528.9 926.7 532.6 922.4 536.0 C918.0 539.5 913.5 542.8 908.9 545.9 C904.3 548.9 899.6 551.8 894.8 554.5 C889.9 557.1 885.0 559.6 880.0 561.8 C874.9 564.0 869.8 565.9 864.6 567.7 C859.4 569.4 854.2 571.0 848.9 572.2 C843.5 573.5 838.2 574.6 832.8 575.4 C827.3 576.2 821.9 576.7 816.4 577.0 C811.0 577.4 802.7 577.2 800.0 577.3 " fill="none" stroke="#4c4c4c" stroke-width="0.7" stroke-linejoin="round"/>
<line x1="812.6" y1="131.4" x2="808.3" y2="143.8" stroke="#161616" stroke-width="1.6"/>
<path d="M722.4 138.9 C728.2 137.9 734.0 137.1 739.9 136.6 C745.7 136.1 751.7 135.9 757.5 136.0 C763.4 136.1 769.4 136.5 775.2 137.1 C781.1 137.8 787.0 138.7 792.8 139.9 C798.7 141.1 804.5 142.6 810.2 144.4 C815.9 146.2 821.6 148.2 827.2 150.5 C832.8 152.8 838.3 155.4 843.7 158.3 C849.1 161.1 854.5 164.2 859.6 167.5 C864.8 170.8 869.9 174.4 874.8 178.2 C879.7 182.1 884.5 186.1 889.1 190.4 C893.7 194.6 898.2 199.1 902.5 203.8 C906.7 208.4 910.8 213.3 914.7 218.4 C918.6 223.4 922.4 228.7 925.8 234.0 C929.3 239.4 932.7 245.0 935.7 250.7 C938.8 256.4 941.7 262.2 944.3 268.2 C946.9 274.1 949.3 280.2 951.5 286.3 C953.6 292.5 955.5 298.8 957.2 305.1 C958.9 311.4 960.3 317.8 961.5 324.2 C962.6 330.7 963.5 337.2 964.2 343.7 C964.9 350.2 965.3 356.7 965.4 363.2 C965.6 369.7 965.4 376.3 965.1 382.8 C964.7 389.2 964.1 395.7 963.2 402.1 C962.3 408.5 961.2 414.9 959.8 421.2 C958.4 427.4 956.8 433.7 954.9 439.8 C953.0 445.8 950.9 451.9 948.5 457.7 C946.2 463.6 943.6 469.4 940.7 475.0 C937.9 480.6 934.9 486.0 931.6 491.3 C928.3 496.6 924.8 501.8 921.2 506.7 C917.5 511.6 913.6 516.4 909.5 521.0 C905.5 525.5 901.2 529.9 896.8 534.0 C892.4 538.1 887.7 542.0 883.0 545.7 C878.3 549.4 873.3 552.8 868.3 556.0 C863.3 559.2 858.1 562.1 852.8 564.8 C847.5 567.5 842.1 569.9 836.6 572.1 C831.1 574.2 825.5 576.1 819.9 577.7 C814.2 579.3 808.5 580.6 802.7 581.7 C796.9 582.7 791.1 583.5 785.2 584.0 C779.4 584.5 773.4 584.7 767.6 584.6 C761.7 584.5 755.7 584.1 749.9 583.5 C744.0 582.8 738.1 581.9 732.3 580.7 C726.4 579.5 720.6 578.0 714.9 576.2 C709.2 574.4 703.5 572.4 697.9 570.1 C692.3 567.8 686.8 565.2 681.4 562.3 C676.0 559.5 670.6 556.4 665.5 553.1 C660.3 549.8 655.2 546.2 650.3 542.4 C645.4 538.5 640.6 534.5 636.0 530.2 C631.4 526.0 626.9 521.5 622.6 516.8 C618.4 512.2 614.3 507.3 610.4 502.2 C606.5 497.2 602.7 491.9 599.3 486.6 C595.8 481.2 592.4 475.6 589.4 469.9 C586.3 464.2 583.4 458.4 580.8 452.4 C578.2 446.5 575.8 440.4 573.6 434.3 C571.5 428.1 569.6 421.8 567.9 415.5 C566.2 409.2 564.8 402.8 563.6 396.4 C562.5 389.9 561.6 383.4 560.9 376.9 C560.2 370.4 559.8 363.9 559.7 357.4 C559.5 350.9 559.7 344.3 560.0 337.8 C560.4 331.4 561.0 324.9 561.9 318.5 C562.8 312.1 563.9 305.7 565.3 299.4 C566.7 293.2 568.3 286.9 570.2 280.8 C572.1 274.8 574.2 268.7 576.6 262.9 C578.9 257.0 581.5 251.2 584.4 245.6 C587.2 240.0 590.2 234.6 593.5 229.3 C596.8 224.0 600.3 218.8 603.9 213.9 C607.6 209.0 611.5 204.2 615.6 199.6 C619.6 195.1 623.9 190.7 628.3 186.6 C632.7 182.5 637.4 178.6 642.1 174.9 C646.8 171.2 651.8 167.8 656.8 164.6 C661.8 161.4 667.0 158.5 672.3 155.8 C677.6 153.1 683.0 150.7 688.5 148.5 C694.0 146.4 699.6 144.5 705.2 142.9 C710.9 141.3 716.6 140.0 722.4 138.9 Z" fill="#bebebe" stroke="#161616" stroke-width="1.7" stroke-linejoin="round"/>
<path d="M747.0 136.2 C749.5 136.2 757.0 135.9 762.0 136.1 C767.0 136.3 772.0 136.7 776.9 137.3 C781.9 137.9 786.9 138.7 791.8 139.7 C796.8 140.7 801.7 141.9 806.5 143.3 C811.4 144.7 816.3 146.3 821.0 148.1 C825.8 149.9 830.5 151.9 835.2 154.0 C839.8 156.2 844.4 158.6 849.0 161.1 C853.5 163.6 857.9 166.3 862.3 169.2 C866.6 172.1 870.9 175.2 875.0 178.4 C879.2 181.6 883.2 185.0 887.1 188.6 C891.1 192.1 894.9 195.8 898.6 199.7 C902.3 203.5 905.9 207.5 909.3 211.6 C912.8 215.8 916.1 220.0 919.3 224.4 C922.4 228.8 925.5 233.3 928.3 238.0 C931.2 242.6 933.9 247.3 936.5 252.1 C939.1 257.0 941.5 261.9 943.7 266.9 C946.0 271.9 948.1 277.0 950.0 282.2 C951.9 287.4 953.6 292.6 955.2 297.9 C956.8 303.2 958.2 308.6 959.4 314.0 C960.6 319.4 961.6 324.8 962.5 330.3 C963.3 335.7 964.0 341.2 964.5 346.7 C965.0 352.2 965.3 357.8 965.4 363.3 C965.5 368.8 965.5 374.3 965.2 379.8 C965.0 385.3 964.5 390.8 963.9 396.2 C963.3 401.7 962.5 407.1 961.5 412.4 C960.6 417.8 959.4 423.1 958.1 428.4 C956.7 433.6 955.2 438.8 953.5 443.9 C951.9 449.1 950.0 454.1 948.0 459.0 C946.0 464.0 943.8 468.9 941.4 473.6 C939.0 478.4 936.5 483.0 933.9 487.6 C931.2 492.1 928.3 496.6 925.4 500.8 C922.4 505.1 919.3 509.3 916.0 513.4 C912.7 517.4 909.3 521.3 905.8 525.0 C902.3 528.8 898.6 532.4 894.8 535.8 C891.0 539.2 887.1 542.5 883.1 545.6 C879.1 548.7 875.0 551.7 870.8 554.4 C866.5 557.2 862.2 559.8 857.8 562.2 C853.4 564.6 848.9 566.8 844.3 568.8 C839.8 570.9 832.8 573.4 830.4 574.4 " fill="none" stroke="#161616" stroke-width="3.0" stroke-linejoin="round"/>
<path d="M776.9 137.3 C779.4 137.7 786.9 138.7 791.8 139.7 C796.8 140.7 801.7 141.9 806.5 143.3 C811.4 144.7 816.3 146.3 821.0 148.1 C825.8 149.9 830.5 151.9 835.2 154.0 C839.8 156.2 844.4 158.6 849.0 161.1 C853.5 163.6 857.9 166.3 862.3 169.2 C866.6 172.1 870.9 175.2 875.0 178.4 C879.2 181.6 883.2 185.0 887.1 188.6 C891.1 192.1 894.9 195.8 898.6 199.7 C902.3 203.5 905.9 207.5 909.3 211.6 C912.8 215.8 916.1 220.0 919.3 224.4 C922.4 228.8 925.5 233.3 928.3 238.0 C931.2 242.6 933.9 247.3 936.5 252.1 C939.1 257.0 941.5 261.9 943.7 266.9 C946.0 271.9 948.1 277.0 950.0 282.2 C951.9 287.4 953.6 292.6 955.2 297.9 C956.8 303.2 958.2 308.6 959.4 314.0 C960.6 319.4 961.6 324.8 962.5 330.3 C963.3 335.7 964.0 341.2 964.5 346.7 C965.0 352.2 965.3 357.8 965.4 363.3 C965.5 368.8 965.5 374.3 965.2 379.8 C965.0 385.3 964.5 390.8 963.9 396.2 C963.3 401.7 962.5 407.1 961.5 412.4 C960.6 417.8 959.4 423.1 958.1 428.4 C956.7 433.6 955.2 438.8 953.5 443.9 C951.9 449.1 950.0 454.1 948.0 459.0 C946.0 464.0 943.8 468.9 941.4 473.6 C939.0 478.4 936.5 483.0 933.9 487.6 C931.2 492.1 928.3 496.6 925.4 500.8 C922.4 505.1 919.3 509.3 916.0 513.4 C912.7 517.4 909.3 521.3 905.8 525.0 C902.3 528.8 898.6 532.4 894.8 535.8 C891.0 539.2 887.1 542.5 883.1 545.6 C879.1 548.7 875.0 551.7 870.8 554.4 C866.5 557.2 860.0 560.9 857.8 562.2 " fill="none" stroke="#4c4c4c" stroke-width="0.7" stroke-linejoin="round"/>
<path d="M679.6 297.0 C678.7 300.5 675.4 309.8 674.0 317.9 C672.6 326.0 671.5 336.0 671.5 345.6 C671.5 355.2 672.9 366.6 674.3 375.7 C675.7 384.8 679.0 395.9 680.0 400.0 L698.3 391.8 C697.7 390.0 695.5 384.6 694.5 380.9 C693.5 377.1 692.7 373.3 692.2 369.5 C691.7 365.7 691.4 361.7 691.4 357.9 C691.4 354.0 691.7 350.2 692.2 346.4 C692.7 342.6 693.4 338.8 694.4 335.1 C695.4 331.5 696.7 327.9 698.2 324.5 C699.6 321.1 702.4 316.3 703.3 314.6 Z" fill="url(#bg)" stroke="none" stroke-width="1.8" stroke-linejoin="round" />
<path d="M744.3 222.9 L752.0 216.8 L752.0 216.8 C754.1 216.8 760.3 216.7 764.5 217.0 C768.6 217.3 772.8 217.8 776.9 218.5 C781.0 219.3 785.1 220.2 789.1 221.4 C793.2 222.5 797.2 223.9 801.1 225.5 C805.0 227.1 808.9 228.9 812.7 230.9 C816.5 232.9 820.3 235.1 823.9 237.5 C827.5 239.9 832.7 243.9 834.5 245.2 L813.9 276.7 C811.1 276.4 802.3 274.8 796.9 274.7 C791.5 274.6 786.3 275.2 781.6 276.0 C776.9 276.8 771.0 278.8 768.9 279.4 Z" fill="url(#bg)" stroke="none" stroke-width="1.8" stroke-linejoin="round" />
<path d="M750.9 437.5 C752.7 437.7 758.0 438.6 761.5 438.7 C765.0 438.9 768.6 438.7 772.1 438.2 C775.6 437.8 779.1 437.0 782.4 435.9 C785.8 434.9 790.6 432.6 792.3 431.9 L817.8 492.6 C814.6 493.2 806.2 496.1 798.8 496.2 C791.4 496.3 781.8 495.3 773.3 493.1 C764.8 490.9 755.4 487.0 747.9 483.0 C740.4 479.0 731.6 471.3 728.4 469.0 Z" fill="url(#bg)" stroke="none" stroke-width="1.8" stroke-linejoin="round" />
<path d="M864.3 323.6 L882.4 315.7 L882.4 315.7 C883.0 317.9 885.1 324.4 886.1 328.9 C887.2 333.3 888.0 337.8 888.7 342.3 C889.4 346.8 889.9 351.4 890.1 356.0 C890.4 360.5 890.5 365.1 890.4 369.6 C890.3 374.2 890.0 378.7 889.5 383.2 C889.0 387.7 888.3 392.2 887.5 396.6 C886.6 401.0 885.5 405.4 884.3 409.7 C883.0 413.9 880.7 420.2 880.0 422.3 L859.8 400.2 C861.1 397.1 865.9 389.8 867.7 381.9 C869.6 374.0 871.5 362.7 870.9 353.0 C870.3 343.3 865.4 328.5 864.3 323.6 Z" fill="url(#bg)" stroke="none" stroke-width="1.8" stroke-linejoin="round" />
<path d="M654.2 275.3 C653.2 277.2 649.8 282.8 647.8 286.7 C645.9 290.6 644.0 294.6 642.4 298.7 C640.8 302.9 639.4 307.1 638.1 311.4 C636.9 315.7 635.8 320.0 634.9 324.5 C634.1 328.9 633.4 333.4 632.9 337.9 C632.4 342.4 632.1 346.9 632.0 351.5 C631.9 356.0 632.0 360.6 632.3 365.2 C632.6 369.7 633.1 374.3 633.8 378.8 C634.5 383.4 635.3 387.9 636.4 392.3 C637.5 396.8 638.7 401.2 640.2 405.5 C641.6 409.8 644.2 416.2 645.0 418.3 L680.0 400.0 C679.0 395.9 675.7 384.8 674.3 375.7 C672.9 366.6 671.5 355.2 671.5 345.6 C671.5 336.0 672.6 326.0 674.0 317.9 C675.4 309.8 678.7 300.5 679.6 297.0 Z" fill="#5f5f5f" stroke="#161616" stroke-width="1.8" stroke-linejoin="round" />
<path d="M704.3 229.0 L744.3 222.9 L768.9 279.4 L764.7 282.3 L761.4 282.3 C759.6 282.4 754.3 282.4 750.9 282.8 C747.4 283.3 743.9 284.0 740.5 285.0 C737.2 286.1 732.3 288.4 730.7 289.0 Z" fill="#616161" stroke="#161616" stroke-width="1.8" stroke-linejoin="round" />
<path d="M704.3 229.0 C706.2 228.2 711.9 225.5 715.7 224.0 C719.6 222.6 723.6 221.3 727.6 220.3 C731.6 219.3 735.6 218.5 739.7 217.9 C743.8 217.3 750.0 216.9 752.0 216.8 L744.3 222.9 Z" fill="#1c1c1c" stroke="#161616" stroke-width="1.8" stroke-linejoin="round" />
<path d="M768.9 279.4 C771.0 278.8 776.9 276.8 781.6 276.0 C786.3 275.2 791.5 274.6 796.9 274.7 C802.3 274.8 811.1 276.4 813.9 276.7 L801.2 297.9 L801.2 297.9 C799.7 296.9 795.2 293.4 792.1 291.6 C788.9 289.7 785.6 288.1 782.3 286.8 C778.9 285.5 775.4 284.4 772.0 283.7 C768.5 282.9 763.2 282.6 761.4 282.3 Z" fill="url(#dk1)" stroke="#161616" stroke-width="1.8" stroke-linejoin="round" />
<path d="M721.6 423.3 C723.1 424.3 727.5 427.8 730.7 429.6 C733.9 431.5 737.2 433.1 740.6 434.4 C744.0 435.7 749.2 436.9 750.9 437.5 L728.4 469.0 L688.1 475.8 Z" fill="#474747" stroke="#161616" stroke-width="1.8" stroke-linejoin="round" />
<path d="M688.1 475.8 L728.4 469.0 L728.4 469.0 C731.6 471.3 740.4 479.0 747.9 483.0 C755.4 487.0 764.8 490.9 773.3 493.1 C781.8 495.3 791.4 496.4 798.8 496.2 C806.2 496.0 814.5 492.8 817.6 492.1 L817.6 492.1 C815.7 492.9 810.1 495.6 806.2 497.0 C802.4 498.5 798.4 499.7 794.4 500.7 C790.5 501.7 786.4 502.5 782.4 503.1 C778.3 503.6 774.2 504.0 770.1 504.1 C766.0 504.3 761.8 504.2 757.7 503.9 C753.6 503.6 749.5 503.1 745.4 502.3 C741.3 501.6 737.2 500.6 733.2 499.5 C729.2 498.3 725.2 496.9 721.3 495.3 C717.4 493.8 713.5 492.0 709.7 490.0 C706.0 488.0 702.2 485.8 698.6 483.4 C695.0 481.1 689.9 477.0 688.1 475.8 Z" fill="url(#dk2)" stroke="#161616" stroke-width="1.8" stroke-linejoin="round" />
<path d="M824.5 329.6 L864.3 323.6 L864.3 323.6 C865.4 328.5 870.3 343.3 870.9 353.0 C871.5 362.7 869.6 374.0 867.7 381.9 C865.9 389.8 861.1 397.1 859.8 400.2 L819.3 406.5 L819.3 406.5 C820.2 404.9 822.9 400.1 824.4 396.7 C825.9 393.3 827.2 389.7 828.2 386.1 C829.2 382.4 829.9 378.7 830.4 374.9 C830.9 371.1 831.2 367.3 831.2 363.4 C831.2 359.6 831.0 355.7 830.5 351.9 C830.0 348.1 829.2 344.2 828.2 340.5 C827.2 336.8 825.1 331.4 824.5 329.6 Z" fill="url(#wl)" stroke="#161616" stroke-width="1.8" stroke-linejoin="round" />
<polygon points="824.5,329.6 877.6,302.9 882.4,315.7 864.3,323.6" fill="#222222" stroke="#161616" stroke-width="1.8" stroke-linejoin="round" />
<polygon points="819.3,406.5 859.8,400.2 880.0,422.3 868.2,445.7" fill="#484848" stroke="#161616" stroke-width="1.8" stroke-linejoin="round" />
<path d="M654.2 275.3 C653.2 277.2 649.8 282.8 647.8 286.7 C645.9 290.6 644.0 294.6 642.4 298.7 C640.8 302.9 639.4 307.1 638.1 311.4 C636.9 315.7 635.8 320.0 634.9 324.5 C634.1 328.9 633.4 333.4 632.9 337.9 C632.4 342.4 632.1 346.9 632.0 351.5 C631.9 356.0 632.0 360.6 632.3 365.2 C632.6 369.7 633.1 374.3 633.8 378.8 C634.5 383.4 635.3 387.9 636.4 392.3 C637.5 396.8 638.7 401.2 640.2 405.5 C641.6 409.8 644.2 416.2 645.0 418.3 L698.3 391.8 C697.7 390.0 695.5 384.6 694.5 380.9 C693.5 377.1 692.7 373.3 692.2 369.5 C691.7 365.7 691.4 361.7 691.4 357.9 C691.4 354.0 691.7 350.2 692.2 346.4 C692.7 342.6 693.4 338.8 694.4 335.1 C695.4 331.5 696.7 327.9 698.2 324.5 C699.6 321.1 702.4 316.3 703.3 314.6 Z" fill="none" stroke="#161616" stroke-width="1.8" stroke-linejoin="round" />
<path d="M704.3 229.0 C706.2 228.2 711.9 225.5 715.7 224.0 C719.6 222.6 723.6 221.3 727.6 220.3 C731.6 219.3 735.6 218.5 739.7 217.9 C743.8 217.3 747.9 216.9 752.0 216.8 C756.2 216.6 760.3 216.7 764.5 217.0 C768.6 217.3 772.8 217.8 776.9 218.5 C781.0 219.3 785.1 220.2 789.1 221.4 C793.2 222.5 797.2 223.9 801.1 225.5 C805.0 227.1 808.9 228.9 812.7 230.9 C816.5 232.9 820.3 235.1 823.9 237.5 C827.5 239.9 832.7 243.9 834.5 245.2 L801.2 297.9 C799.7 296.9 795.2 293.4 792.1 291.6 C788.9 289.7 785.6 288.1 782.3 286.8 C778.9 285.5 775.4 284.4 772.0 283.7 C768.5 282.9 764.9 282.5 761.4 282.3 C757.9 282.2 754.3 282.4 750.9 282.8 C747.4 283.3 743.9 284.0 740.5 285.0 C737.2 286.1 732.3 288.4 730.7 289.0 Z" fill="none" stroke="#161616" stroke-width="1.8" stroke-linejoin="round" />
<path d="M721.6 423.3 C723.1 424.3 727.5 427.8 730.7 429.6 C733.9 431.5 737.2 433.1 740.6 434.4 C744.0 435.7 747.4 436.7 750.9 437.5 C754.4 438.2 758.0 438.6 761.5 438.7 C765.0 438.9 768.6 438.7 772.1 438.2 C775.6 437.8 779.1 437.0 782.4 435.9 C785.8 434.9 790.6 432.6 792.3 431.9 L817.6 492.1 C815.7 492.9 810.1 495.6 806.2 497.0 C802.4 498.5 798.4 499.7 794.4 500.7 C790.5 501.7 786.4 502.5 782.4 503.1 C778.3 503.6 774.2 504.0 770.1 504.1 C766.0 504.3 761.8 504.2 757.7 503.9 C753.6 503.6 749.5 503.1 745.4 502.3 C741.3 501.6 737.2 500.6 733.2 499.5 C729.2 498.3 725.2 496.9 721.3 495.3 C717.4 493.8 713.5 492.0 709.7 490.0 C706.0 488.0 702.2 485.8 698.6 483.4 C695.0 481.1 689.9 477.0 688.1 475.8 Z" fill="none" stroke="#161616" stroke-width="1.8" stroke-linejoin="round" />
<path d="M877.6 302.9 C878.4 305.0 881.0 311.4 882.4 315.7 C883.8 320.0 885.1 324.4 886.1 328.9 C887.2 333.3 888.0 337.8 888.7 342.3 C889.4 346.8 889.9 351.4 890.1 356.0 C890.4 360.5 890.5 365.1 890.4 369.6 C890.3 374.2 890.0 378.7 889.5 383.2 C889.0 387.7 888.3 392.2 887.5 396.6 C886.6 401.0 885.5 405.4 884.3 409.7 C883.0 413.9 881.6 418.2 880.0 422.3 C878.3 426.4 876.5 430.4 874.6 434.3 C872.6 438.2 869.2 443.8 868.2 445.7 L819.3 406.5 C820.2 404.9 822.9 400.1 824.4 396.7 C825.9 393.3 827.2 389.7 828.2 386.1 C829.2 382.4 829.9 378.7 830.4 374.9 C830.9 371.1 831.2 367.3 831.2 363.4 C831.2 359.6 831.0 355.7 830.5 351.9 C830.0 348.1 829.2 344.2 828.2 340.5 C827.2 336.8 825.1 331.4 824.5 329.6 Z" fill="none" stroke="#161616" stroke-width="1.8" stroke-linejoin="round" />
<ellipse cx="758.4" cy="361.5" rx="57" ry="61.3" transform="rotate(2.5 758.4 361.5)" fill="#3a3a3a" stroke="#161616" stroke-width="1.6"/>
<ellipse cx="755.6" cy="361.5" rx="54.1" ry="61" transform="rotate(2.5 755.6 361.5)" fill="#bebebe" stroke="#161616" stroke-width="1.6"/>
<text x="436.6" y="336.8" font-family="'Liberation Sans',sans-serif" font-size="35" fill="#e2d82e" fill-opacity="0.58" textLength="250.5" lengthAdjust="spacingAndGlyphs">Mechnexus.com</text>
<line x1="457.4" y1="325.1" x2="1055.7" y2="399" stroke="#6ef57a" stroke-width="2"/>
<line x1="779.9" y1="30" x2="736.5" y2="652" stroke="#d86262" stroke-width="2"/>
<ellipse cx="756.3" cy="361.5" rx="30.8" ry="33.9" transform="rotate(3 756.3 361.5)" fill="none" stroke="#0cf00c" stroke-width="2.1"/>
<rect x="753.1" y="361" width="4.2" height="4.2" fill="#10c840"/>
<line x1="568.4" y1="260.4" x2="782" y2="375.2" stroke="#ffff00" stroke-width="2.1"/>
<polygon points="730,347.3 740.1,348.6 736.6,354.6" fill="#ffff00"/>
<polygon points="784,376.3 777.7,368.6 773.2,374.6" fill="#ffff00"/>
<g transform="translate(568.4 260.4) rotate(28.26)"><text transform="translate(-65.5 6.4) scale(0.95 1.13)" x="0" y="0" font-family="'Liberation Sans',sans-serif" font-size="16" fill="#ffff00">Ø30 mm</text></g>
</svg>
</div>
</body>
</html>
